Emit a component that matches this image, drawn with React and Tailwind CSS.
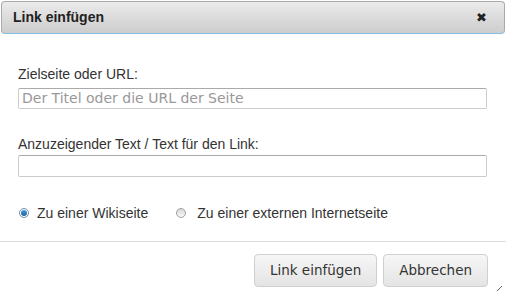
import React from "react";

export default function App() {
  return (
    <div className="relative w-[506px] h-[293px] bg-white overflow-hidden" style={{ fontFamily: '"Liberation Sans", Arial, sans-serif' }}>
      <div className="mx-[1px] mt-[1px] h-[33px] rounded-[4px] border border-[#aaaaaa] border-b-[#86bfe6] bg-gradient-to-b from-[#ebebeb] to-[#cdcdcd] flex items-center justify-between pl-[11px] pr-[17px]">
        <span className="text-[14px] font-bold text-[#222]">Link einfügen</span>
        <span className="text-[13px] text-[#222] leading-none">✖</span>
      </div>
      <div className="px-[18px] pt-[32px]">
        <div className="text-[14px] text-[#333] leading-[16px]">Zielseite oder URL:</div>
        <div className="mt-[6px] w-[469px] h-[21px] border border-[#ccc] border-t-[#aaa] rounded-[2px] flex items-center px-[3px]">
          <span className="text-[14px] text-[#999]" style={{ fontFamily: '"DejaVu Sans", Verdana, sans-serif' }}>Der Titel oder die URL der Seite</span>
        </div>
        <div className="mt-[27px] text-[14px] text-[#333] leading-[16px]">Anzuzeigender Text / Text für den Link:</div>
        <div className="mt-[3px] w-[469px] h-[22px] border border-[#ccc] border-t-[#aaa] rounded-[2px]"></div>
        <div className="mt-[28px] h-[16px] flex items-center text-[14px] text-[#333] leading-[16px]">
          <span className="w-[10px] h-[10px] rounded-full border border-[#6d8fb0] bg-white flex items-center justify-center ml-[1px]">
            <span className="w-[6px] h-[6px] rounded-full bg-gradient-to-b from-[#4a9de0] to-[#1b5f9e]"></span>
          </span>
          <span className="ml-[8px]">Zu einer Wikiseite</span>
          <span className="ml-[28px] w-[10px] h-[10px] rounded-full border border-[#a0a0a0] bg-gradient-to-b from-[#d8d8d8] to-[#f8f8f8]"></span>
          <span className="ml-[11px]">Zu einer externen Internetseite</span>
        </div>
      </div>
      <div className="mt-[20px] border-t border-[#dddddd]"></div>
      <div className="flex justify-end gap-[6px] pr-[18px] pt-[12px]" style={{ fontFamily: '"DejaVu Sans", Verdana, sans-serif' }}>
        <button className="h-[33px] px-[15px] border border-[#d0d0d0] rounded-[4px] bg-gradient-to-b from-[#f6f6f6] to-[#e4e4e4] text-[13.5px] text-[#333]">Link einfügen</button>
        <button className="h-[33px] px-[15px] border border-[#d0d0d0] rounded-[4px] bg-gradient-to-b from-[#f6f6f6] to-[#e4e4e4] text-[13.5px] text-[#333]">Abbrechen</button>
      </div>
      <svg className="absolute right-[4px] bottom-[2px]" width="5" height="5" viewBox="0 0 5 5">
        <line x1="0" y1="5" x2="5" y2="0" stroke="#666" strokeWidth="1" />
      </svg>
    </div>
  );
}
